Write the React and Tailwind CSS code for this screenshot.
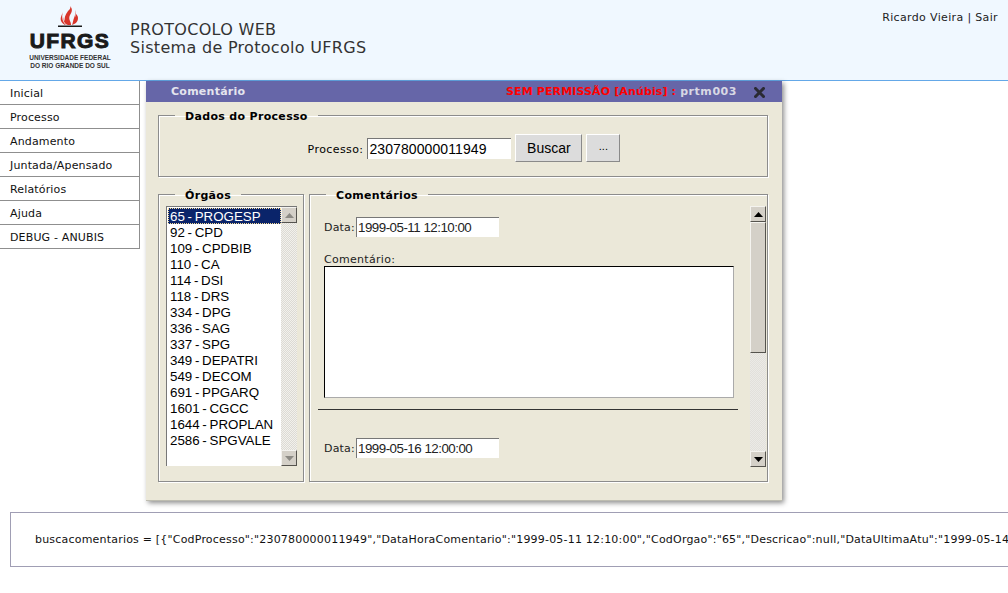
const MENU = ["Inicial", "Processo", "Andamento", "Juntada/Apensado", "Relatórios", "Ajuda", "DEBUG - ANUBIS"];
const ORGAOS = ["65 - PROGESP", "92 - CPD", "109 - CPDBIB", "110 - CA", "114 - DSI", "118 - DRS", "334 - DPG", "336 - SAG", "337 - SPG", "349 - DEPATRI", "549 - DECOM", "691 - PPGARQ", "1601 - CGCC", "1644 - PROPLAN", "2586 - SPGVALE"];
const JSON_TEXT = 'buscacomentarios = [{"CodProcesso":"230780000011949","DataHoraComentario":"1999-05-11 12:10:00","CodOrgao":"65","Descricao":null,"DataUltimaAtu":"1999-05-14 10:00:00","CodUsuario":"prtm003"}]';

function Logo() {
  return (
    <div className="w-[82px] h-[64px] flex flex-col items-center font-['Liberation_Sans',sans-serif] text-[#1a1a1a]">
      <svg width="24" height="22" viewBox="0 0 24 22" className="shrink-0">
        <path fill="#d8352a" d="M12 0c3 3 2 6 0 9-1 2-1 4 0 6 1 2 1 3 1 4H10C6 18 5 14 6 11c0 2 0 3 1 4-1-4 1-7 3-10 2-2 3-3 2-5zM5 6c-1 3-3 5-2 9 1 2 3 4 5 4C5 17 3 11 5 6zM17 4c1 3 0 5-1 8-1 2-1 5-2 7 3-1 6-3 6-7 0-2-1-3-2-4 0 1 0 2-1 3 1-3 1-5 0-7z" />
        <rect x="0" y="19.5" width="24" height="1.5" fill="#1a1a1a" />
      </svg>
      <div className="text-[21px] leading-[20px] font-bold tracking-[1.4px] [-webkit-text-stroke:1px_#1a1a1a] whitespace-nowrap mt-[3px]">UFRGS</div>
      <div className="text-[6.5px] leading-[8px] font-bold whitespace-nowrap mt-[3px] text-[#333]">UNIVERSIDADE FEDERAL</div>
      <div className="text-[6.5px] leading-[8px] font-bold whitespace-nowrap text-[#333]">DO RIO GRANDE DO SUL</div>
    </div>
  );
}

function Arrow({ down, light }) {
  return (
    <svg width="9" height="5" viewBox="0 0 9 5">
      <path d={down ? "M0 0h9L4.5 5z" : "M0 5h9L4.5 0z"} fill={light ? "#8c8a84" : "#000"} />
    </svg>
  );
}

function ScrollBtn({ down, light }) {
  return (
    <div className="w-[16px] h-[16px] shrink-0 flex items-center justify-center bg-[#d4d0c8] border border-t-[#f4f3ef] border-l-[#f4f3ef] border-r-[#55534e] border-b-[#55534e]">
      <Arrow down={down} light={light} />
    </div>
  );
}

function Group({ title, className, children }) {
  return (
    <fieldset className={`border border-[#8c8c8c] shadow-[inset_1px_1px_0_#fff,1px_1px_0_#fff] ${className}`}>
      <legend className="ml-[16px] px-[10px] h-[13px] text-[11px] leading-[15px] font-bold tracking-[0.32px] text-black">{title}</legend>
      {children}
    </fieldset>
  );
}

function DateField({ value, className }) {
  return (
    <div className={`flex items-center ${className}`}>
      <span className="text-[11px] w-[32px] tracking-[0.2px] mt-[2px]">Data:</span>
      <div className="w-[143px] h-[20px] bg-white border-l border-t border-[#777] font-['Liberation_Sans',sans-serif] text-[13.33px] tracking-[-0.5px] leading-[19px] pl-[1px] whitespace-nowrap">{value}</div>
    </div>
  );
}

export default function App() {
  return (
    <div className="w-[1008px] h-[593px] overflow-hidden bg-white text-black font-['DejaVu_Sans',sans-serif]">
      <header className="h-[81px] bg-[#f0f8ff] border-b border-[#64a8e8] flex pl-[29px] pt-[6px]">
        <Logo />
        <div className="ml-[19px] mt-[15px] text-[16px] leading-[18px] tracking-[0.3px] text-[#333] whitespace-nowrap">
          <div>PROTOCOLO WEB</div>
          <div>Sistema de Protocolo UFRGS</div>
        </div>
        <div className="ml-auto mr-[10px] mt-[5px] text-[11px] leading-[14px] tracking-[0.35px] text-[#222]">Ricardo Vieira | Sair</div>
      </header>

      <div className="flex items-start">
        <nav className="w-[140px] shrink-0 border-r border-[#8f8f8f]">
          {MENU.map((m) => (
            <div key={m} className="h-[24px] border-b border-[#8f8f8f] pl-[10px] text-[11px] leading-[25px] tracking-[0.15px] text-[#111]">{m}</div>
          ))}
        </nav>

        <section className="ml-[6px] w-[636px] h-[420px] shrink-0 bg-[#ebe8d9] border-b border-[#bdbcb0] shadow-[2px_2px_5px_rgba(0,0,0,0.45)]">
          <div className="h-[21px] bg-[#6666a8] flex items-center pl-[25px] pr-[17px] pt-[1px] text-[11px] font-bold tracking-[0.25px] text-[#e4e4ee]">
            <span>Comentário</span>
            <span className="ml-auto tracking-[0.13px] text-[#ff0000]">SEM PERMISSÃO [Anúbis] :</span>
            <span className="ml-[4px] tracking-[0.55px] text-[#d8d8e4]">prtm003</span>
            <svg width="11" height="11" viewBox="0 0 11 11" className="ml-[17px]">
              <path d="M1.5 1.5l8 8M9.5 1.5l-8 8" stroke="#2a2a33" strokeWidth="3" strokeLinecap="square" />
            </svg>
          </div>

          <div className="pl-[12px] pr-[14px] pt-[7px]">
            <Group title="Dados do Processo" className="h-[68px]">
              <div className="flex items-center justify-center pt-[12px] pl-[2px]">
                <span className="text-[11px] tracking-[0.4px] mt-[4px]">Processo:</span>
                <div className="ml-[4px] w-[144px] h-[21px] bg-white border-l border-t border-[#777] font-['Liberation_Sans',sans-serif] text-[14px] tracking-[0.1px] leading-[20px] pl-[1px]">230780000011949</div>
                <button className="ml-[4px] w-[67px] h-[28px] bg-[#dcdcdc] border border-t-white border-l-white border-r-[#8a8a8a] border-b-[#8a8a8a] font-['Liberation_Sans',sans-serif] text-[14px]">Buscar</button>
                <button className="ml-[4px] w-[34px] h-[28px] bg-[#dcdcdc] border border-t-white border-l-white border-r-[#8a8a8a] border-b-[#8a8a8a] font-['Liberation_Sans',sans-serif] text-[11px] pb-[4px]">...</button>
              </div>
            </Group>

            <div className="flex gap-[5px] mt-[11px]">
              <Group title="Órgãos" className="w-[146px] h-[294px] shrink-0">
                <div className="ml-[7px] mt-[5px] w-[131px] h-[260px] bg-white border-l border-t border-[#777] flex font-['Liberation_Sans',sans-serif] text-[13.33px] [word-spacing:-1px] leading-[17px]">
                  <ul className="flex-1 min-w-0 pt-[1px] pl-[1px]">
                    {ORGAOS.map((o, i) => (
                      <li key={o} className={i === 0 ? "h-[16px] pl-[2px] bg-[#0a246a] text-white outline-1 -outline-offset-1 outline-dotted outline-[#f5db95] whitespace-nowrap" : "h-[16px] pl-[2px] whitespace-nowrap"}>{o}</li>
                    ))}
                  </ul>
                  <div className="w-[16px] shrink-0 bg-[repeating-conic-gradient(#dcdad4_0_25%,#f2f1ec_0_50%)] bg-[length:2px_2px] flex flex-col justify-between">
                    <ScrollBtn light />
                    <ScrollBtn down light />
                  </div>
                </div>
              </Group>

              <Group title="Comentários" className="flex-1 h-[294px] min-w-0">
                <div className="flex pt-[5px] pr-[1px]">
                  <div className="flex-1 min-w-0 h-[261px] overflow-hidden pl-[14px] text-[#222]">
                    <DateField value="1999-05-11 12:10:00" className="mt-[11px]" />
                    <div className="mt-[16px] h-[13px] text-[11px] leading-[14px] tracking-[0.3px]">Comentário:</div>
                    <div className="w-[410px] h-[132px] bg-white border border-l-black border-t-black border-r-[#aaa] border-b-[#aaa]"></div>
                    <hr className="-ml-[6px] mt-[11px] w-[420px] border-t border-[#333]" />
                    <DateField value="1999-05-16 12:00:00" className="mt-[28px]" />
                  </div>
                  <div className="w-[16px] h-[261px] shrink-0 bg-[repeating-conic-gradient(#e2e0db_0_25%,#ebeae6_0_50%)] bg-[length:2px_2px] flex flex-col">
                    <ScrollBtn />
                    <div className="h-[131px] shrink-0 bg-[#d4d0c8] border border-t-[#f4f3ef] border-l-[#f4f3ef] border-r-[#55534e] border-b-[#55534e]"></div>
                    <div className="flex-1"></div>
                    <ScrollBtn down />
                  </div>
                </div>
              </Group>
            </div>
          </div>
        </section>
      </div>

      <div className="ml-[10px] mt-[11px] w-[1100px] h-[55px] border border-[#a09eb4] flex items-center pl-[24px] pt-[2px] text-[11px] tracking-[0.2px] text-[#111] whitespace-nowrap overflow-hidden">{JSON_TEXT}</div>
    </div>
  );
}
